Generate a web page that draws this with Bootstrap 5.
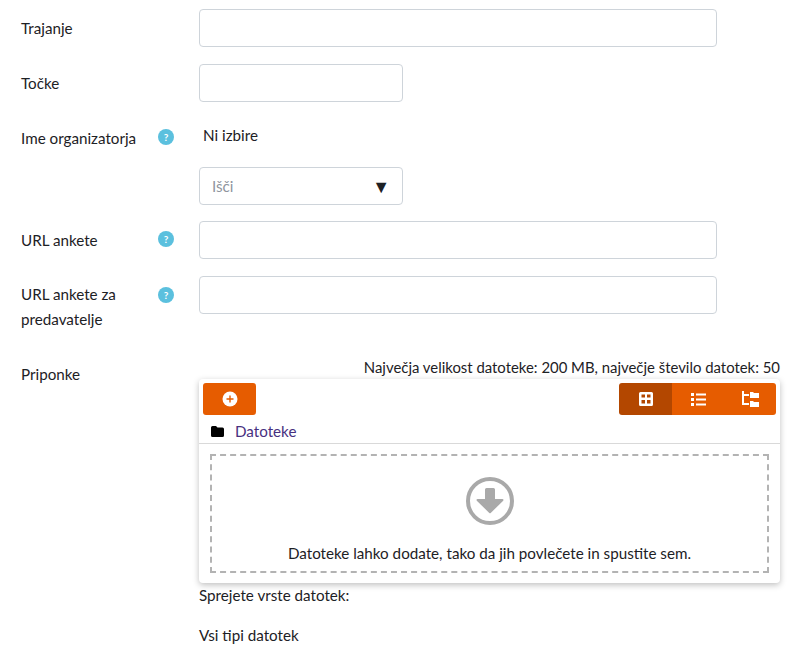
<!DOCTYPE html>
<html lang="sl">
<head>
<meta charset="utf-8">
<title>Obrazec</title>
<link rel="stylesheet" href="https://cdn.jsdelivr.net/npm/bootstrap@5.3.0/dist/css/bootstrap.min.css">
<style>
html,body{height:658px;overflow:hidden;background:#fff}
body{font-family:Lato,"Noto Sans",sans-serif;font-size:15.2px;color:#1d2125;line-height:22px}
.sheet{padding:9px 15px 0 21px}
.frow{display:flex;margin-bottom:17px}
.frow.attach{margin-top:20px}
.flabel{width:178px;flex:none;display:flex;justify-content:space-between;padding:8px 25px 0 0}
.flabel span{display:block}
.flabel span.twoline{line-height:25px;margin-top:-2px}
.frow.attach .flabel{padding-top:11px}
.fctl{flex:1;min-width:0}
.tinput{display:block;height:38px;width:518px;border:1px solid #ced4da;border-radius:4px;background:#fff}
.tinput.short{width:204px}
.qmark{width:16px;height:16px;border-radius:50%;background:#5bc0de;color:#fff;font-size:10px;font-weight:700;line-height:16px;text-align:center;flex:none;margin:2px 0 0 0}
.flabel span.twoline + .qmark{margin-top:3px}
.noselect{padding:6px 0 0 4px;height:38px;margin-bottom:10px;line-height:20px}
.srch{width:204px;height:38px;border:1px solid #ced4da;border-radius:4px;display:flex;align-items:center;justify-content:space-between;padding:0 12px 0 12px;color:#8f959e}
.srch i{font-style:normal;color:#1d2125;font-size:18px}
.limit{text-align:right;height:22px;margin-top:4px;line-height:22px;font-size:14.9px}
.picker{margin-top:1px;width:581px;border-radius:4px;background:#fff;box-shadow:0 2px 6px rgba(0,0,0,.25)}
.ptop{height:64px;padding:4px 4px 0;position:relative}
.addbtn{width:53px;height:32px;background:#e65c00;border-radius:3px;display:flex;align-items:center;justify-content:center}
.viewgrp{display:flex;height:32px;border-radius:3px;overflow:hidden}
.viewgrp div{width:52px;background:#e65c00;display:flex;align-items:center;justify-content:center}
.viewgrp div.on{background:#b34700;width:53px}
.crumb{display:flex;align-items:center;padding:0 0 0 8px;height:22px;margin-top:5px}
.crumb a{color:#47307f;text-decoration:none;margin-left:11px}
.pdrop{border-top:1px solid #d9d9d9;height:140px;padding:10px 11px 10px;border-radius:0 0 4px 4px}
.dash{height:119px;border:2px dashed #b3b3b3;text-align:center;padding-top:21px}
.dash svg{display:block;margin:0 auto 17px}
.after{padding-top:1px}
.after p{margin:0 0 18px;line-height:22px}
</style>
</head>
<body>
<div class="sheet">
  <div class="frow"><div class="flabel"><span>Trajanje</span></div><div class="fctl"><div class="tinput"></div></div></div>
  <div class="frow"><div class="flabel"><span>Točke</span></div><div class="fctl"><div class="tinput short"></div></div></div>
  <div class="frow mb-3"><div class="flabel"><span>Ime organizatorja</span><div class="qmark">?</div></div>
    <div class="fctl"><div class="noselect">Ni izbire</div><div class="srch">Išči<i>▼</i></div></div></div>
  <div class="frow"><div class="flabel"><span>URL ankete</span><div class="qmark">?</div></div><div class="fctl"><div class="tinput"></div></div></div>
  <div class="frow"><div class="flabel"><span class="twoline">URL ankete za<br>predavatelje</span><div class="qmark">?</div></div><div class="fctl"><div class="tinput"></div></div></div>
  <div class="frow attach"><div class="flabel"><span>Priponke</span></div>
    <div class="fctl">
      <div class="limit">Največja velikost datoteke: 200 MB, največje število datotek: 50</div>
      <div class="picker">
        <div class="ptop">
          <div class="d-flex justify-content-between">
            <div class="addbtn"><svg width="16" height="16" viewBox="0 0 16 16"><circle cx="8" cy="8" r="7.5" fill="#fff"/><path d="M8 4.500v7M4.500 8h7" stroke="#e65c00" stroke-width="1.400"/></svg></div>
            <div class="viewgrp">
              <div class="on"><svg width="14" height="14" viewBox="0 0 14 14"><path fill="#fff" fill-rule="evenodd" d="M1.500 0h11A1.500 1.500 0 0 1 14 1.500v11a1.500 1.500 0 0 1-1.500 1.500h-11A1.500 1.500 0 0 1 0 12.500v-11A1.500 1.500 0 0 1 1.500 0zM2.500 2.500v3h3.500v-3zM8 2.500v3h3.500v-3zM2.500 8v3.500h3.500V8zM8 8v3.500h3.500V8z"/></svg></div>
              <div><svg width="15" height="13" viewBox="0 0 15 13"><path fill="#fff" d="M0 0h3v3H0zM5 .5h10v2H5zM0 5h3v3H0zM5 5.500h10v2H5zM0 10h3v3H0zM5 10.500h10v2H5z"/></svg></div>
              <div><svg width="18" height="16" viewBox="0 0 18 16"><path fill="none" stroke="#fff" stroke-width="2" d="M2 0v13h6M2 4h6"/><path fill="#fff" d="M9 1h3l1 1h5v5H9zM9 10h3l1 1h5v5H9z"/></svg></div>
            </div>
          </div>
          <div class="crumb"><svg width="13" height="11" viewBox="0 0 13 11"><path d="M0 1.500A1.500 1.500 0 0 1 1.500 0H5l1.500 1.500h5A1.500 1.500 0 0 1 13 3v6.500A1.500 1.500 0 0 1 11.500 11h-10A1.500 1.500 0 0 1 0 9.500z" fill="#000"/></svg><a href="#">Datoteke</a></div>
        </div>
        <div class="pdrop">
          <div class="dash">
            <svg width="48" height="48" viewBox="0 0 48 48"><circle cx="24" cy="24" r="22" fill="none" stroke="#a9a9a9" stroke-width="4"/><path fill="#a9a9a9" d="M19 12.500a1.500 1.500 0 0 1 1.500-1.500h7a1.500 1.500 0 0 1 1.500 1.500V22h7.500a1 1 0 0 1 .7 1.700L24.700 36a1 1 0 0 1-1.400 0L10.800 23.700a1 1 0 0 1 .7-1.700H19z"/></svg>
            Datoteke lahko dodate, tako da jih povlečete in spustite sem.
          </div>
        </div>
      </div>
      <div class="after"><p>Sprejete vrste datotek:</p><p>Vsi tipi datotek</p></div>
    </div>
  </div>
</div>
</body>
</html>
